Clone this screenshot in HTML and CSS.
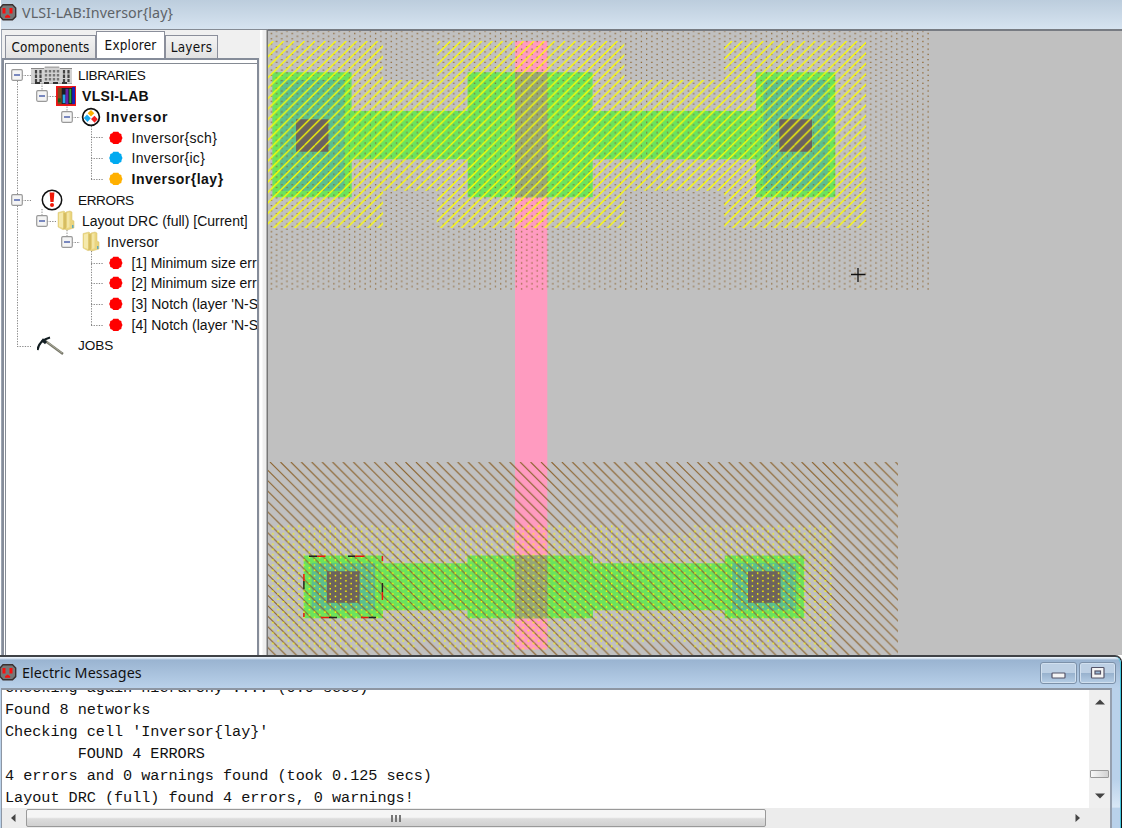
FILE: index.html
```
<!DOCTYPE html>
<html lang="en">
<head>
<meta charset="utf-8">
<title>VLSI-LAB:Inversor{lay}</title>
<link rel="stylesheet" href="styles.css">
</head>
<body>
<svg class="defs" width="0" height="0">
  <defs>
    <symbol id="plug" viewBox="0 0 17 17">
      <path d="M3 .8h9.500l3.200 3.200v8.600l-3.200 3.200H3L0 12.600V4z" fill="#777" stroke="#3b3030" stroke-width="1.400"/>
      <path d="M2.500 4h3v5.500h-3zM9.500 4h3v5.500h-3zM5 13.800v-1.600L7.600 10.500l2.600 1.700v1.600z" fill="#f81010"/>
    </symbol>
    <symbol id="dot" viewBox="0 0 14 14">
      <path d="M4.300.8h5l1 1.500 2 .7.3 2 .9 2-.9 2-.3 2-2 .7-1 1.400h-5l-1-1.400-2-.7-.3-2-.8-2 .8-2 .3-2 2-.7z"/>
    </symbol>
    <symbol id="folder" viewBox="0 0 18 21">
      <path d="M1 2.500 7 1l2 2v15.500l-3 1.300L1 17z" fill="#ecd780" stroke="#d9c67a" stroke-width=".5"/>
      <path d="M9 2l4-1 2 1v8l2 1v7l-7 2-4-1.500L9 17z" fill="#ead57f" stroke="#d4bc66" stroke-width=".5"/>
      <path d="M2 3.500 6 2.500V18l-4-1.500z" fill="#f5e9ac"/>
      <path d="M6.500 2.500 9 3.500v15l-2.500.8z" fill="#d6bd62"/>
      <path d="M10 3l2.500-.7v15L10 18z" fill="#f3e5a4"/>
      <path d="M15 15h1.500v3H15z" fill="#62a9bd"/>
    </symbol>
    <symbol id="toggle" viewBox="0 0 12 12">
      <rect x=".7" y=".7" width="10.600" height="10.600" rx="1.200" fill="#f4f4f4" stroke="#999" stroke-width="1.200"/>
      <path d="M3 6h6" stroke="#4459a8" stroke-width="1.400"/>
    </symbol>
  </defs>
</svg>
<div class="screen">
  <header class="titlebar">
    <svg class="plug"><use href="#plug"/></svg>
    <span class="title">VLSI-LAB:Inversor{lay}</span>
  </header>

  <main class="workspace">
    <aside class="side">
      <nav class="tabs">
        <span class="tab tab-components">Components</span>
        <span class="tab tab-active">Explorer</span>
        <span class="tab tab-layers">Layers</span>
      </nav>
      <div class="frame">
        <div class="tree">
          <svg class="guides" viewBox="6 64 251 591">
            <g fill="none" stroke="#888" stroke-width="1" stroke-dasharray="1.300 1.300">
              <path d="M17.500 81V346M22 75.500h9M17 346.500h14M22 200.500h9M42 83v8M47 96.500h9M67 104v8M72 117.500h8M91.500 126v54M91 137.500h13M91 158.500h13M91 179.500h13M42 209v7M47 221.500h9M67 230v7M72 242.500h8M91.500 251v75M91 263.500h13M91 283.500h13M91 304.500h13M91 325.500h13"/>
            </g>
          </svg>
          <div class="row d0"><svg class="tg"><use href="#toggle"/></svg>
            <svg class="ic ic-lib" viewBox="0 0 42 21"><path d="M0 3h13l1-2h14l1 2h12v16H0z" fill="#d2d2d2"/><path d="M0 3.500h13M29 3.500h12" stroke="#888"/><path d="M14 2.500h14" stroke="#aaa"/><path d="M5 5v12M9.500 5v12M33 5v12M37.500 5v12" stroke="#444" stroke-width="2.200" stroke-dasharray="3.500 1"/><path d="M15 5v12M19 5v12M23 5v12M27 5v12" stroke="#777" stroke-width="2.400" stroke-dasharray="2.500 1.500"/><path d="M0 18.500h41" stroke="#aaa"/><path d="M4 18h34" stroke="#333" stroke-width="2" stroke-dasharray="5 4"/></svg>
            <span>LIBRARIES</span></div>
          <div class="row d1 bold"><svg class="tg"><use href="#toggle"/></svg>
            <svg class="ic ic-books" viewBox="0 0 21 21"><path d="M0 0h21v21H0z" fill="#f01818"/><path d="M2 2h17v17H2z" fill="#172028"/><path d="M2 2h4v17H2z" fill="#7c4b20"/><path d="M7 9h3v9H7z" fill="#25a8e8"/><path d="M10 3h3v16h-3z" fill="#6822a8"/><path d="M14 3h2v15h-2z" fill="#28a536"/><path d="M17 1h3v18h-3z" fill="#1820b8"/><path d="M2 13h3v4H2z" fill="#175c1a"/></svg>
            <span>VLSI-LAB</span></div>
          <div class="row d2 bold"><svg class="tg"><use href="#toggle"/></svg>
            <svg class="ic ic-cell" viewBox="0 0 20 20"><circle cx="10" cy="10" r="8.400" fill="#fff" stroke="#111" stroke-width="1.700"/><path d="m10 3 3.300 3.300L10 9.600 6.700 6.300z" fill="#ffb000"/><path d="m6 7.500 3.800 3.800L6.500 15 2.800 11z" fill="#18aaf0"/><path d="m13.500 8.800 3.300 3.500-3.300 3.500-3.500-3.700z" fill="#f52020"/></svg>
            <span class="w-inv">Inversor</span></div>
          <div class="row d3"><svg class="ic ic-dot red"><use href="#dot"/></svg><span>Inversor{sch}</span></div>
          <div class="row d3"><svg class="ic ic-dot blue"><use href="#dot"/></svg><span>Inversor{ic}</span></div>
          <div class="row d3 bold"><svg class="ic ic-dot amber"><use href="#dot"/></svg><span>Inversor{lay}</span></div>
          <div class="row d0"><svg class="tg"><use href="#toggle"/></svg>
            <svg class="ic ic-err" viewBox="0 0 22 22"><circle cx="11" cy="11" r="9.700" fill="#fff" stroke="#111" stroke-width="1.500"/><path d="M8.600 3.500h4.800l-.8 9.500H9.400z" fill="#f01808"/><circle cx="11" cy="16" r="2" fill="#f01808"/></svg>
            <span>ERRORS</span></div>
          <div class="row d1"><svg class="tg"><use href="#toggle"/></svg><svg class="ic ic-folder"><use href="#folder"/></svg><span class="w-drc">Layout DRC (full) [Current]</span></div>
          <div class="row d2"><svg class="tg"><use href="#toggle"/></svg><svg class="ic ic-folder"><use href="#folder"/></svg><span>Inversor</span></div>
          <div class="row d3"><svg class="ic ic-dot red"><use href="#dot"/></svg><span class="w-min">[1] Minimum size err</span></div>
          <div class="row d3"><svg class="ic ic-dot red"><use href="#dot"/></svg><span class="w-min">[2] Minimum size err</span></div>
          <div class="row d3"><svg class="ic ic-dot red"><use href="#dot"/></svg><span class="w-notch">[3] Notch (layer 'N-S</span></div>
          <div class="row d3"><svg class="ic ic-dot red"><use href="#dot"/></svg><span class="w-notch">[4] Notch (layer 'N-S</span></div>
          <div class="row d-jobs"><svg class="ic ic-pick" viewBox="0 0 28 20"><path d="m7 4 19 14" stroke="#77776a" stroke-width="2.300"/><path d="m9 5 16 12" stroke="#b5b5a2" stroke-width=".8"/><path d="M.5 14Q2 4.500 13 1.500" fill="none" stroke="#111c20" stroke-width="2.200"/><path d="M5 3.500 9 7" stroke="#152025" stroke-width="3"/></svg><span>JOBS</span></div>
        </div>
      </div>
    </aside>
    <div class="splitter"></div>

    <svg class="layout" viewBox="268 31 854 624" preserveAspectRatio="none">
      <defs>
        <pattern id="pselect" width="80" height="80" patternUnits="userSpaceOnUse" patternTransform="translate(273.300 41) scale(1.3031)">
          <path d="M0 0l-80 80M8 0l-80 80M16 0l-80 80M24 0l-80 80M32 0l-80 80M40 0l-80 80M48 0l-80 80M56 0l-80 80M64 0l-80 80M72 0l-80 80M80 0l-80 80M88 0l-80 80M96 0l-80 80M104 0l-80 80M112 0l-80 80M120 0l-80 80M128 0l-80 80M136 0l-80 80M144 0l-80 80M152 0l-80 80M160 0l-80 80" stroke="#ff0" stroke-width=".95" fill="none"/>
        </pattern>
        <pattern id="pwell" width="80" height="80" patternUnits="userSpaceOnUse" patternTransform="translate(270 462) scale(1.3031)">
          <path d="M-80 0l80 80M-72 0l80 80M-64 0l80 80M-56 0l80 80M-48 0l80 80M-40 0l80 80M-32 0l80 80M-24 0l80 80M-16 0l80 80M-8 0l80 80M0 0l80 80M8 0l80 80M16 0l80 80M24 0l80 80M32 0l80 80M40 0l80 80M48 0l80 80M56 0l80 80M64 0l80 80M72 0l80 80M80 0l80 80" stroke="#8b632e" stroke-width=".85" fill="none"/>
        </pattern>
        <pattern id="nwell" width="80" height="16" patternUnits="userSpaceOnUse" patternTransform="translate(270.700 288.400) scale(1.3031)">
          <path d="M0 .5h80M0 4.500h80M0 8.500h80M0 12.500h80M4 2.500h76M4 6.500h76M4 10.500h76M4 14.500h76" stroke="#8b632e" stroke-width="1" stroke-dasharray="1 7" fill="none"/>
        </pattern>
        <pattern id="nselect" width="80" height="16" patternUnits="userSpaceOnUse" patternTransform="translate(277.400 525.500) scale(1.3031)">
          <path d="M0 .5h80M0 4.500h80M0 8.500h80M0 12.500h80M4 2.500h76M4 6.500h76M4 10.500h76M4 14.500h76" stroke="#ff0" stroke-width="1.100" stroke-dasharray="1.100 6.900" fill="none"/>
        </pattern>
      </defs>
      <rect x="268" y="31" width="854" height="624" fill="#c0c0c0"/>
      <!-- polysilicon -->
      <path d="M515 41h32.300v608.500H515z" fill="#ff9bc0"/>
      <!-- active -->
      <path d="M272.300 72.300h79.300V111h116V72.300h125V111H756V72.300h79.300v125H756v-38H592.700v38h-125v-38h-116v38h-79.300z" fill="#6be35d"/>
      <path d="M303.700 555.500H383v7.800h84.500v-7.800H593v7.800h131.700v-7.800h79.500v62.700h-79.500v-8H593v8H467.500v-8H383v8h-79.300z" fill="#6be35d"/>
      <path d="M515 72.300h32.300v125H515zM515 555.500h32.300v62.700H515z" fill="#95a777"/>
      <!-- metal -->
      <path d="M280 80h64.500v110.700H280zM763.300 80h64.500v110.700h-64.500zM311.700 563.300H375v47h-63.300zM732.200 563.300H796v47h-63.800z" fill="#5bbf8e"/>
      <!-- wells and selects -->
      <path d="M268 31h662v259H268z" fill="url(#nwell)"/>
      <path d="M268 462h630v193H268z" fill="url(#pwell)"/>
      <!-- contact cuts -->
      <path d="M296 119.300h32.300v32.400H296zM779.300 119.300H812v32.400h-32.700zM327 571.300h32.500v31.400H327zM748 571.300h32.500v31.400H748z" fill="#6b635f"/>
      <path d="M327 571.300h32.500v31.400H327zM748 571.300h32.500v31.400H748z" fill="url(#pwell)" opacity=".5"/>
      <path d="M268 41h115v39h53.700V41h187.600v39h100V41H866v187H724.300v-37.300h-100V228H436.700v-37.300H383V228H268z" fill="url(#pselect)"/>
      <path d="M271 525h144.500v8h22V525H624v8h70v-8h138.500v125H694v-8h-70v8H437.500v-8h-22v8H271z" fill="url(#nselect)"/>
      <!-- selection outline -->
      <g fill="none" stroke-width="1.500">
        <path d="M309 556.300h8M348 556.300h7M303.900 589v-8M382.400 583v9M329 617.600h8M368.500 617.600h7.500" stroke="#222"/>
        <path d="M317 556.300h8.500M355 556.300h9.500M303.900 574v7M303.900 613v4M382.400 556v5M382.400 592v8M321 617.600h8M361 617.600h7.500" stroke="#e81a10"/>
      </g>
      <path d="M851 274.500h14.500M858 268v14" stroke="#111" stroke-width="1.300"/>
    </svg>
  </main>

  <section class="messages">
    <header class="msgbar">
      <svg class="plug"><use href="#plug"/></svg>
      <span class="title msgtitle">Electric Messages</span>
      <span class="winbtn"><svg viewBox="0 0 37 22"><rect x="12" y="11" width="13" height="5" rx=".8" fill="#f5f5f5" stroke="#555468" stroke-width="1.200"/></svg></span>
      <span class="winbtn"><svg viewBox="0 0 37 22"><rect x="12.500" y="5.500" width="12.500" height="10.500" rx=".8" fill="#f5f5f5" stroke="#555468" stroke-width="1.200"/><rect x="16" y="9" width="5.500" height="3" fill="#9ab7d4" stroke="#555468" stroke-width="1.200"/></svg></span>
    </header>
    <div class="msgbody">
      <div class="msgpane">
        <div class="msgtop">
          <pre class="log">Checking again hierarchy .... (0.0 secs)
Found 8 networks
Checking cell 'Inversor{lay}'
        FOUND 4 ERRORS
4 errors and 0 warnings found (took 0.125 secs)
Layout DRC (full) found 4 errors, 0 warnings!</pre>
          <div class="vscroll">
            <svg viewBox="0 0 10 6"><path d="M0 5.500 5 .5l5 5z"/></svg>
            <span class="vthumb"></span>
            <svg class="down" viewBox="0 0 10 6"><path d="M0 .5h10l-5 5z"/></svg>
          </div>
        </div>
        <div class="hscroll">
          <svg viewBox="0 0 6 10"><path d="M5.500 1v8L1 5z"/></svg>
          <span class="hthumb"><i></i><i></i><i></i></span>
          <svg class="right" viewBox="0 0 6 10"><path d="M.5 1v8L5 5z"/></svg>
        </div>
      </div>
      <div class="edge"></div>
    </div>
  </section>
</div>
</body>
</html>
```
FILE: styles.css
```
* { box-sizing: border-box; }
body { margin: 0; background: #fff; font-family: "Liberation Sans", Arial, sans-serif; color: #111; }
svg { display: block; flex: none; }
.defs { position: absolute; }
.screen { width: 1125px; height: 829px; display: flex; flex-direction: column; overflow: hidden; padding-bottom: 1px; }

.titlebar { height: 29px; width: 1121px; margin-left: 1px; display: flex; align-items: center; background: linear-gradient(#bccddd, #d6e3f0); padding-bottom: 4px; flex: none; }
.plug { width: 17px; height: 17px; margin-left: -1px; }
.title { font: 14.300px/20px "Noto Sans", "Open Sans", sans-serif; color: #5e6368; margin-left: 5px; white-space: nowrap; letter-spacing: .08px; }

.workspace { display: flex; height: 626px; flex: none; padding-left: 1px; }
.side { width: 259px; display: flex; flex-direction: column; background: #f0f0f0; border-top: 1px solid #858b94; border-left: 1px solid #9da5b2; }
.tabs { height: 28px; display: flex; align-items: flex-end; padding-left: 3px; flex: none; }
.tab { height: 23px; border: 1px solid #8b8f9b; border-bottom: 0; background: linear-gradient(#f3f3f3, #e2e2e2); font: 13.400px/23px "DejaVu Sans Condensed", "DejaVu Sans", sans-serif; display: flex; justify-content: center; white-space: nowrap; }
.tab-components { width: 91px; letter-spacing: .2px; }
.tab-active { width: 69px; height: 27px; background: #fff; letter-spacing: .22px; line-height: 27px; }
.tab-layers { width: 53px; letter-spacing: .3px; }
.frame { flex: 1; border: 2px solid #858c99; border-bottom: 0; background: #fff; padding: 3px 0 0 1px; min-height: 0; width: 257px; }
.tree { height: 100%; border-top: 1px solid #858b94; border-left: 1px solid #858b94; position: relative; overflow: hidden; padding-top: .6px; }
.guides { position: absolute; left: 0; top: 0; width: 251px; height: 591px; }
.row { position: relative; height: 20.850px; display: flex; align-items: center; white-space: nowrap; font-size: 14px; }
.row span { flex: none; letter-spacing: .2px; }
.bold { font-weight: bold; }
.row.bold span { letter-spacing: .5px; }
.row.d1.bold span { letter-spacing: .3px; }
.row .w-drc { letter-spacing: 0; }
.row .w-min { letter-spacing: -.05px; }
.row .w-notch { letter-spacing: .05px; }
.row.bold .w-inv { letter-spacing: .9px; }
.tg { width: 12px; height: 12px; position: relative; }
.row.d0, .row.d-jobs { font-size: 13.600px; }
.d0 { padding-left: 5px; }
.row.d0 span { letter-spacing: -.4px; }
.row.d-jobs span { letter-spacing: -.1px; }
.d1 { padding-left: 30px; }
.d2 { padding-left: 55px; }
.row.d3 { padding-left: 103px; }
.row.d3 span { padding-left: .5px; }
.row.d3:not(.bold) span:not([class]) { letter-spacing: .3px; }
.d-jobs { padding-left: 31px; }
.ic-lib { width: 42px; height: 21px; margin: 0 5px 0 8px; }
.ic-books { width: 20px; height: 20px; margin: 0 6px 0 8px; }
.ic-cell { width: 20px; height: 20px; margin: 0 5px 0 8px; }
.ic-err { width: 22px; height: 22px; margin: 0 15px 0 18px; }
.ic-folder { width: 18px; height: 21px; margin: 0 7px 0 9px; }
.ic-dot { width: 14px; height: 14px; margin-right: 8px; }
.ic-pick { width: 28px; height: 20px; margin-right: 13px; }
.red { fill: #f00; }
.blue { fill: #00aaf0; }
.amber { fill: #ffb000; }
.splitter { width: 8px; flex: none; background: linear-gradient(90deg, #fff 0 2px, #efefef 3px 6px, #777 7px); border-top: 1px solid #858b94; }
.layout { width: 854px; height: 626px; border-top: 2px solid #777b82; }

.messages { height: 173px; width: 1122px; display: flex; flex-direction: column; border-top: 2px solid #3f4246; border-right: 1px solid #111; border-radius: 0 7px 0 0; background: #b9d1ea; flex: none; }
.msgbar { height: 31px; flex: none; display: flex; align-items: center; background: linear-gradient(#e8f1fa 0 1px, #9ab4d1 3px, #b9d1ea); padding: 0 4px 0 1px; border-radius: 0 6px 0 0; border-right: 1px solid #43c4dc; }
.msgbar .title { color: #111; margin-right: auto; }
.winbtn { width: 37px; height: 22px; margin-left: 2px; border: 1px solid #7c91a9; border-radius: 3px; background: linear-gradient(#bdd0e4 48%, #98b2ce 52%, #b6cee6); box-shadow: inset 0 0 0 1px #d1e0ef; }
.winbtn svg { width: 37px; height: 22px; margin: -1px; }
.msgbody { flex: 1; display: flex; min-height: 0; }
.msgpane { width: 1111px; border: 1px solid #8d96a3; border-top-width: 2px; border-right: 2px solid #959fae; border-bottom: 0; display: flex; flex-direction: column; background: #fff; margin-left: 1px; }
.msgtop { height: 118px; display: flex; overflow: hidden; }
.log { margin: 0; flex: 1; padding-left: 3px; margin-top: -13px; font: 15.200px/22.100px "Liberation Mono", "Courier New", monospace; letter-spacing: -.03px; color: #111; }
.vscroll { width: 21px; background: #efefef; display: flex; flex-direction: column; align-items: center; padding: 9px 0; }
.vscroll svg { width: 10px; height: 6px; fill: #444; }
.vthumb { width: 19px; height: 8px; border: 1px solid #999; border-radius: 1px; background: linear-gradient(90deg, #f8f8f8, #d2d2d2); margin-top: 65px; }
.vscroll .down { margin-top: 15px; }
.hscroll { flex: 1; background: #ececec; display: flex; align-items: center; padding: 0 29px 0 8px; }
.hscroll svg { width: 6px; height: 10px; fill: #444; }
.hthumb { width: 740px; height: 18px; border: 1px solid #999; border-radius: 2px; margin-left: 10px; background: linear-gradient(#f5f5f5 45%, #dcdcdc 55%, #d0d0d0); display: flex; gap: 2px; align-items: center; justify-content: center; }
.hthumb i { width: 2px; height: 7px; background: #777; }
.hscroll .right { margin-left: auto; }
.edge { flex: 1; border-right: 1px solid #43c4dc; background: linear-gradient(#b9d1ea 65%, #d8e7f6 85%, #b9d1ea 86%); }
```
